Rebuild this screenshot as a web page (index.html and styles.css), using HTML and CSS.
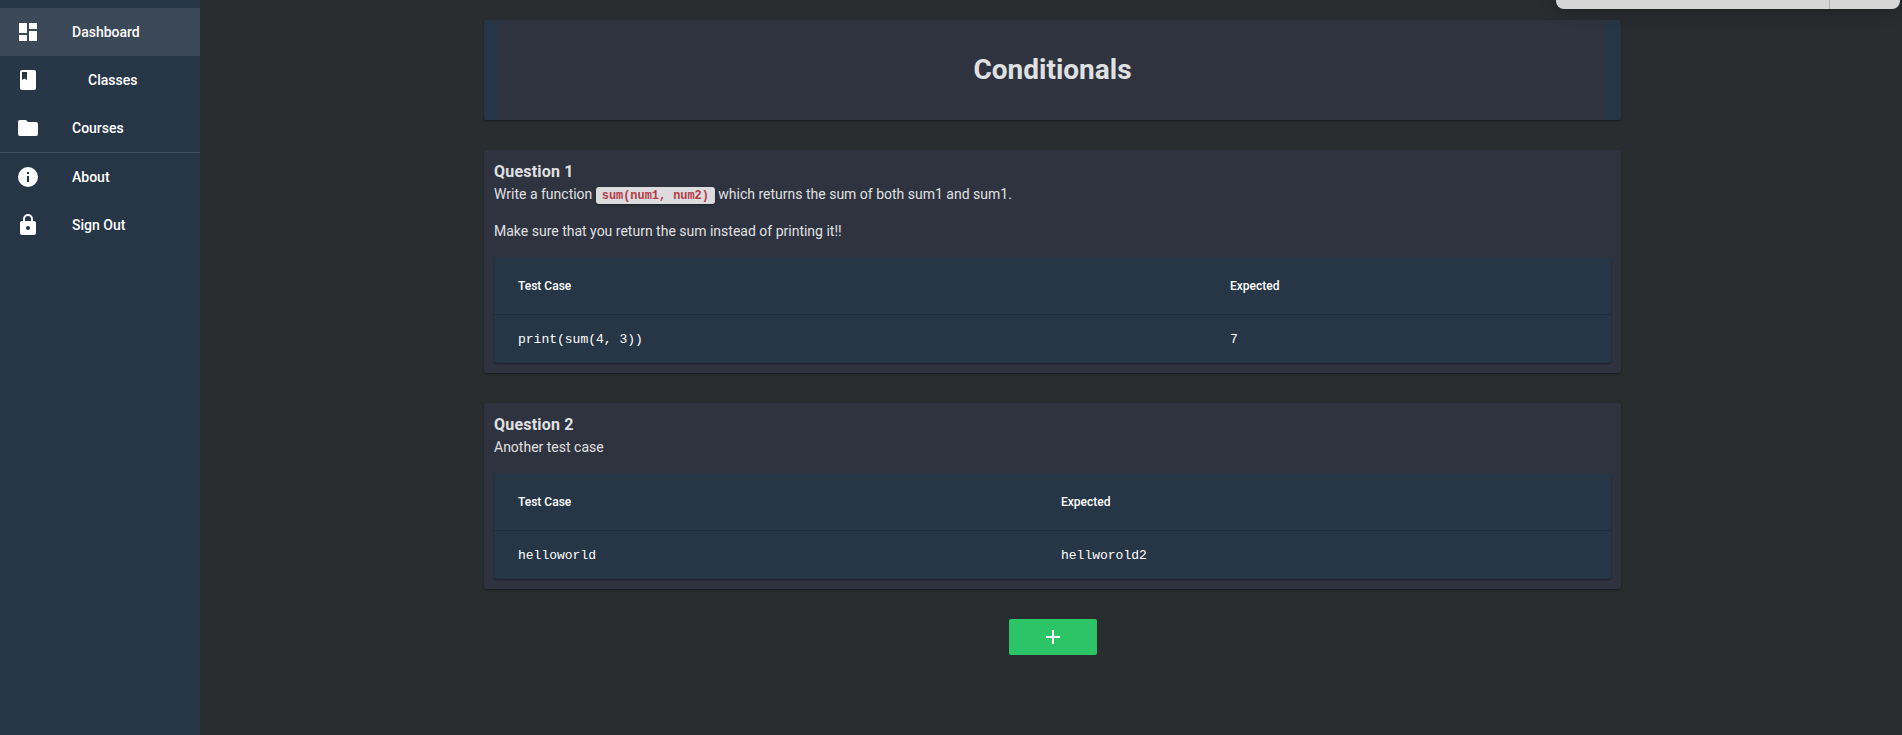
FILE: index.html
```html
<!DOCTYPE html>
<html lang="en">
<head>
<meta charset="utf-8">
<title>Conditionals</title>
<link rel="stylesheet" href="styles.css">
</head>
<body>
<div class="app">
  <nav class="sidebar">
    <a class="item active"><svg viewBox="0 0 24 24"><path d="M13,3V9H21V3M13,21H21V11H13M3,21H11V15H3M3,13H11V3H3V13Z"/></svg><span>Dashboard</span></a>
    <a class="item nested"><svg viewBox="0 0 24 24"><path fill-rule="evenodd" d="M6,2H18A2,2 0 0,1 20,4V20A2,2 0 0,1 18,22H6A2,2 0 0,1 4,20V4A2,2 0 0,1 6,2M6,4V12L8.5,10.5L11,12V4H6Z"/></svg><span>Classes</span></a>
    <a class="item"><svg viewBox="0 0 24 24"><path d="M10,4H4C2.89,4 2,4.89 2,6V18A2,2 0 0,0 4,20H20A2,2 0 0,0 22,18V8C22,6.89 21.1,6 20,6H12L10,4Z"/></svg><span>Courses</span></a>
    <hr class="divider">
    <a class="item"><svg viewBox="0 0 24 24"><path d="M13,9H11V7H13M13,17H11V11H13M12,2A10,10 0 0,0 2,12A10,10 0 0,0 12,22A10,10 0 0,0 22,12A10,10 0 0,0 12,2Z"/></svg><span>About</span></a>
    <a class="item"><svg viewBox="0 0 24 24"><path d="M12,17A2,2 0 0,0 14,15C14,13.89 13.1,13 12,13A2,2 0 0,0 10,15A2,2 0 0,0 12,17M18,8A2,2 0 0,1 20,10V20A2,2 0 0,1 18,22H6A2,2 0 0,1 4,20V10C4,8.89 4.9,8 6,8H7V6A5,5 0 0,1 12,1A5,5 0 0,1 17,6V8H18M12,3A3,3 0 0,0 9,6V8H15V6A3,3 0 0,0 12,3Z"/></svg><span>Sign Out</span></a>
  </nav>
  <main class="content">
    <header class="banner"><h1>Conditionals</h1></header>
    <section class="card">
      <h2>Question 1</h2>
      <p>Write a function <code>sum(num1, num2)</code> which returns the sum of both sum1 and sum1.</p>
      <p class="note">Make sure that you return the sum instead of printing it!!</p>
      <div class="table cases-one">
        <div class="row head"><span>Test Case</span><span>Expected</span></div>
        <div class="row"><span>print(sum(4, 3))</span><span>7</span></div>
      </div>
    </section>
    <section class="card">
      <h2>Question 2</h2>
      <p>Another test case</p>
      <div class="table cases-two">
        <div class="row head"><span>Test Case</span><span>Expected</span></div>
        <div class="row"><span>helloworld</span><span>hellworold2</span></div>
      </div>
    </section>
    <button class="add" aria-label="Add question"><svg viewBox="0 0 24 24"><path d="M19,13H13V19H11V13H5V11H11V5H13V11H19V13Z"/></svg></button>
  </main>
  <div class="popup"></div>
</div>
</body>
</html>
```

FILE: styles.css
```css
* { box-sizing: border-box; }
body { margin: 0; background: #292d2f; font-family: Roboto, sans-serif; color: #e0e0e2; }
.app { display: flex; height: 735px; position: relative; overflow: hidden; }
.sidebar { width: 200px; padding-top: 8px; background: #273647; flex: none; }
.item { display: flex; align-items: center; gap: 32px; height: 48px; padding: 0 16px; color: #fff; font-size: 14px; font-weight: 500; }
.item svg { width: 24px; height: 24px; fill: #fff; }
.item.active { background: #3b4857; }
.item.nested { gap: 48px; }
.divider { height: 1px; margin: 0; border: 0; background: #435060; }
.content { width: 1137px; margin: 20px 0 0 284px; display: flex; flex-direction: column; align-items: stretch; gap: 30px; }
.banner { height: 100px; padding: 0 15px; background: #273646; border-radius: 2px; box-shadow: 0 1px 2px rgba(0,0,0,.45); }
.banner h1 { margin: 0; height: 100px; line-height: 100px; background: #2e333f; text-align: center; font-size: 28px; font-weight: 700; }
.card { padding: 10px; background: #2e333f; border-radius: 2px; box-shadow: 0 1px 2px rgba(0,0,0,.45); }
.card h2 { margin: 0; font-size: 16px; line-height: 24px; font-weight: 700; letter-spacing: .2px; }
.card p { margin: 0; height: 21px; font-size: 14px; line-height: 21px; white-space: pre; }
.card .note { margin-top: 16px; }
code { display: inline-block; height: 17px; padding: 0 6px; background: #dcdcde; color: #b33c46; border-radius: 3px; box-shadow: 0 1px 2px rgba(0,0,0,.4); font: 700 11.9px/19px "Liberation Mono", monospace; vertical-align: 0; margin: -3px 0; }
.table { margin-top: 16px; background: #273646; border-radius: 2px; box-shadow: 0 1px 2px rgba(0,0,0,.4); }
.row { display: grid; height: 48px; align-items: center; font: 13px "Liberation Mono", monospace; color: #fff; }
.cases-one .row { grid-template-columns: 712px 1fr; }
.cases-two .row { grid-template-columns: 543px 1fr; }
.row span { padding: 0 24px; }
.row.head { height: 57px; border-bottom: 1px solid #202c38; font: 500 12px Roboto, sans-serif; }
.add { align-self: center; display: flex; align-items: center; justify-content: center; width: 88px; height: 36px; padding: 0; border: 0; border-radius: 2px; background: #2bc568; }
.add svg { width: 24px; height: 24px; fill: #fff; }
.popup { position: absolute; top: -20px; left: 1556px; width: 344px; height: 29px; background: linear-gradient(90deg, transparent 273px, #b2b2b2 273px, #b2b2b2 274px, transparent 274px), #d6d6d6; border-radius: 8px; box-shadow: 0 2px 16px rgba(0,0,0,.3); }
```
